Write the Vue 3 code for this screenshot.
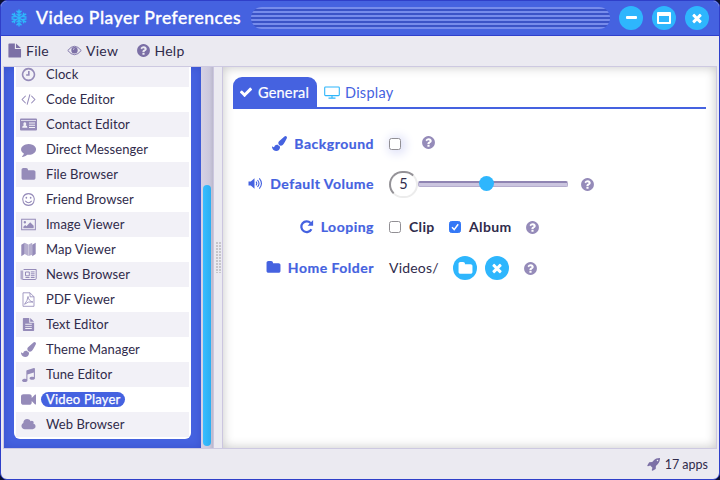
<script setup>
import { h } from 'vue'

const FA = '0 0 1792 1792'
const glyphs = {
  check: [FA, 'M1671 566q0 40-28 68l-724 724-136 136q-28 28-68 28t-68-28l-136-136-362-362q-28-28-28-68t28-68l136-136q28-28 68-28t68 28l294 295 656-657q28-28 68-28t68 28l136 136q28 28 28 68z'],
  times: [FA, 'M1490 1322q0 40-28 68l-136 136q-28 28-68 28t-68-28l-294-294-294 294q-28 28-68 28t-68-28l-136-136q-28-28-28-68t28-68l294-294-294-294q-28-28-28-68t28-68l136-136q28-28 68-28t68 28l294 294 294-294q28-28 68-28t68 28l136 136q28 28 28 68t-28 68l-294 294 294 294q28 28 28 68z'],
  folder: [FA, 'M1728 608v704q0 92-66 158t-158 66h-1216q-92 0-158-66t-66-158v-960q0-92 66-158t158-66h320q92 0 158 66t66 158v32h672q92 0 158 66t66 158z'],
  help: [FA, 'M1024 1376v-192q0-14-9-23t-23-9h-192q-14 0-23 9t-9 23v192q0 14 9 23t23 9h192q14 0 23-9t9-23zm256-672q0-88-55.5-163t-138.500-116-170-41q-243 0-371 213-15 24 8 42l132 100q7 6 19 6 16 0 25-12 53-68 86-92 34-24 86-24 48 0 85.500 26t37.500 59q0 38-20 61t-68 45q-63 28-115.500 86.500t-52.500 125.500v36q0 14 9 23t23 9h192q14 0 23-9t9-23q0-19 21.500-49.500t54.500-49.500q32-18 49-28.500t46-35 44.500-48 28-60.500 12.500-81zm384 192q0 209-103 385.500t-279.500 279.500-385.500 103-385.500-103-279.500-279.500-103-385.500 103-385.500 279.500-279.500 385.500-103 385.500 103 279.500 279.500 103 385.500z'],
  camera: [FA, 'M1792 352v1088q0 42-39 59-13 5-25 5-27 0-45-19l-403-403v166q0 119-84.500 203.500t-203.500 84.500h-704q-119 0-203.500-84.500t-84.500-203.500v-704q0-119 84.500-203.500t203.500-84.500h704q119 0 203.500 84.500t84.500 203.500v165l403-402q18-19 45-19 12 0 25 5 39 17 39 59z'],
  cloud: ['0 0 2048 1792', 'M1984 1152q0 159-112.500 271.500t-271.500 112.500h-1088q-185 0-316.500-131.500t-131.500-316.500q0-132 71-241.500t187-163.500q-2-28-2-43 0-212 150-362t362-150q158 0 286.500 88t187.500 230q70-62 166-62 106 0 181 75t75 181q0 75-41 138 129 30 213 134.500t84 239.500z'],
  comment: [FA, 'M1792 896q0 174-120 321.500t-326 233-450 85.500q-70 0-145-8-198 175-460 242-49 14-114 22-17 2-30.500-9t-17.500-29q-3-14 13-40l53-62q60-62 98-129t53-135q-157-89-247.500-220t-90.500-281q0-130 71-248.500t191-204.500 286-136.500 348-50.500q244 0 450 85.500t326 233 120 321.500z'],
  rocket: [FA, 'M1440 448q0-40-28-68t-68-28-68 28-28 68 28 68 68 28 68-28 28-68zm224-288q0 249-75.500 430.500t-253.500 360.500q-81 80-195 176l-20 379q-2 16-16 26l-384 224q-7 4-16 4-12 0-23-9l-64-64q-13-14-8-32l85-276-281-281-276 85q-3 1-9 1-14 0-23-9l-64-64q-17-19-5-39l224-384q10-14 26-16l379-20q96-114 176-195 188-187 358-258t431-71q14 0 24 9.500t10 22.500z'],
  brush: [FA, 'M1615 0q70 0 122.500 46.500t52.500 116.500q0 63-45 151-332 629-465 752-97 91-218 91-126 0-216.500-92.500t-90.500-219.500q0-128 92-212l638-579q59-54 130-54zm-909 1034q39 76 106.500 130t150.500 76l1 71q4 213-129.500 347t-348.500 134q-123 0-218-46.500t-152.500-127.500-86.500-183-29-220q7 5 41 30t62 44.500 59 36.500 46 17q41 0 55-37 25-66 57.500-112.500t69.500-76 88-47.500 103-25.500 125-10.500z'],
  music: [FA, 'M1664 224v1120q0 50-34 89t-86 60.500-103.500 32-96.500 10.500-96.500-10.500-103.500-32-86-60.500-34-89 34-89 86-60.500 103.500-32 96.500-10.500q105 0 192 39v-537l-768 237v709q0 50-34 89t-86 60.500-103.500 32-96.500 10.500-96.500-10.500-103.500-32-86-60.500-34-89 34-89 86-60.500 103.500-32 96.500-10.500q105 0 192 39v-967q0-31 19-56.500t49-35.500l832-256q12-4 28-4 40 0 68 28t28 68z'],
  file: ['0 0 16 16', 'M2.400.5h6v5.800H15v8.300q0 .9-.9.900H2.400q-.9 0-.9-.9V1.400Q1.500.5 2.400.5zM9.600.5l5.200 4.700H9.600z'],
  text: ['0 0 16 16', 'M2.800 1h6v5H14v8.200q0 .8-.8.8H2.800q-.8 0-.8-.8V1.800Q2 1 2.800 1zM9.800 1L14 5H9.800zM4.500 7.300v1h7v-1zm0 2.200v1h7v-1zm0 2.200v1h7v-1z'],
  contact: ['0 0 17 13', 'M1 .5h15q1 0 1 1v10q0 1-1 1H1q-1 0-1-1v-10q0-1 1-1zM1 2v.7h15V2zM4.800 4.200a1.500 1.700 0 0 0-.8 3.100Q2.200 7.600 2.200 9.800h5.200Q7.400 7.600 5.600 7.300a1.500 1.700 0 0 0-.8-3.100zM9 4.500v1h6v-1zm0 2.200v1h6v-1zm0 2.200v1h6v-1z'],
  map: ['0 0 15 14', 'M.3 2.200 3.700.3v11.300L.3 13.700zM11.200 2.200 14.700.3v11.300l-3.500 2.100z', null, 'M3.700.3 7.300 2v11.500l-3.600-1.900zM7.600 2 11.200.3v11.900L7.600 13.500z'],
  clock: ['0 0 14 14', null, 'M7 1.500a5.500 5.500 0 1 0 .01 0M7.300 3.800v3.700H4.800', null, 1.5],
  code: ['0 0 16 14', null, 'M5 3 1.200 7 5 11M11 3l3.800 4L11 11M9.500 1.500l-3 11', null, 1.1],
  smile: ['0 0 14 14', 'M4.200 5.300a.8.900 0 1 0 1.600 0 .8.900 0 1 0-1.600 0M8.200 5.300a.8.900 0 1 0 1.600 0 .8.900 0 1 0-1.600 0', 'M7 1.500a5.500 5.500 0 1 0 .01 0M4 8.300q3 3.600 6 0', null, 1],
  image: ['0 0 16 13', 'M2.500 10.500V9l2-2 1.300 1.300L9.800 4l3.700 3.800v2.700zM2.800 4.100a1.300 1.300 0 1 0 2.600 0 1.300 1.300 0 1 0-2.600 0', 'M.7.9h14.600v11.200H.7z', null, 1.1],
  news: ['0 0 17 12', null, 'M3.600 1h12.600v9q0 1-1 1H2.500M5.500 3.500h3.800v3.800H5.500zM5.500 9h4M10.800 3.400h3.800M10.800 5.300h3.800M10.800 7.200h3.800M10.800 9h3.800', 'M.5 2h2.700v9H1.500q-1 0-1-1z', 1],
  pdf: ['0 0 14 15', null, 'M1.500.8h7l4 4v9.500h-11zM8.500.8v4h4M3 12.300Q6.200 8.500 6.500 4.500Q7.300 9.300 11.500 10Q6.500 9 3 12.300', null, .85],
  eye: ['0 0 16 12', 'M4.600 5.700a3.400 3.400 0 1 0 6.800 0 3.400 3.400 0 1 0-6.800 0zM6.200 5a2 2 0 0 1 1.800-1.500v.8a1.200 1.200 0 0 0-1 .8z', 'M.8 6Q8-3 15.200 6 8 15 .8 6z', null, 1],
  monitor: ['0 0 16 13', null, 'M1.500 1h13q.8 0 .8.800v7q0 .8-.8.800h-13q-.8 0-.8-.8v-7Q.7 1 1.500 1zM8 9.600V12M4.500 12.100h7', null, 1.1],
  volume: ['0 0 15 13', 'M.5 4.500h2.300L6.500 1.300v10.400L2.800 8.500H.5z', 'M8 4.700q1.500 1.800 0 3.600M9.500 3q3 3.500 0 7M11.300 1.400q4.300 5.100 0 10.200', null, 1.1],
  loop: ['0 0 14 14', 'M13.200 1v5.300H8z', 'M10.800 3.700A5 5 0 1 0 11.600 9.500', null, 2.1],
  snow: ['0 0 18 18', null, 'M9 .6v16.800M1.800 4.800l14.400 8.400M1.800 13.200l14.400-8.400M6.500 1.800 9 4.200l2.500-2.400M6.500 16.200 9 13.800l2.500 2.400M1.500 8.300l3.600-.9-.9-3.600M16.500 9.700l-3.600.9.9 3.600M1.500 9.700l3.600.9-.9 3.600M16.500 8.300l-3.600-.9.9-3.600M6.500 4.700 9 6.700l2.500-2M6.500 13.300l2.500-2 2.500 2', null, 1.45]
}

const Icon = (props) => {
  const [viewBox, fill, stroke, soft, width] = glyphs[props.name]
  return h('svg', { viewBox }, [
    fill && h('path', { d: fill, fill: 'currentColor', 'fill-rule': 'evenodd' }),
    soft && h('path', { d: soft, fill: 'currentColor', opacity: 0.7 }),
    stroke && h('path', { d: stroke, fill: 'none', stroke: 'currentColor', 'stroke-width': width })
  ])
}
Icon.props = ['name']

const apps = [
  ['Clock', 'clock'], ['Code Editor', 'code'], ['Contact Editor', 'contact', 'wide'],
  ['Direct Messenger', 'comment'], ['File Browser', 'folder'], ['Friend Browser', 'smile'],
  ['Image Viewer', 'image'], ['Map Viewer', 'map'], ['News Browser', 'news', 'wide'],
  ['PDF Viewer', 'pdf'], ['Text Editor', 'text'], ['Theme Manager', 'brush'],
  ['Tune Editor', 'music'], ['Video Player', 'camera'], ['Web Browser', 'cloud']
]
</script>

<template>
  <div class="desktop">
    <div class="window">
      <header class="titlebar">
        <Icon name="snow" class="snow" />
        <h1>Video Player Preferences</h1>
        <div class="grip"></div>
        <div class="buttons">
          <button class="round"><i class="min"></i></button>
          <button class="round"><i class="max"></i></button>
          <button class="round"><Icon name="times" class="x" /></button>
        </div>
      </header>
      <nav class="menubar">
        <span class="m-file"><Icon name="file" />File</span>
        <span class="m-view"><Icon name="eye" />View</span>
        <span class="m-help"><Icon name="help" />Help</span>
      </nav>
      <main class="body">
        <aside class="sidebar">
          <ul>
            <li v-for="[name, icon, size] in apps" :key="name" :class="{ active: name === 'Video Player' }">
              <Icon :name="icon" :class="size" /><span>{{ name }}</span>
            </li>
          </ul>
        </aside>
        <div class="scroll"><div class="thumb"></div></div>
        <div class="splitter"><div class="dots"></div></div>
        <section class="pane">
          <div class="tabs">
            <div class="tab on"><Icon name="check" />General</div>
            <div class="tab off"><Icon name="monitor" />Display</div>
          </div>
          <div class="form">
            <div class="row">
              <label class="key"><Icon name="brush" />Background</label>
              <i class="box glow"></i>
              <Icon name="help" class="help h1" />
            </div>
            <div class="row">
              <label class="key"><Icon name="volume" />Default Volume</label>
              <span class="num">5</span>
              <div class="slider"><div class="knob"></div></div>
              <Icon name="help" class="help h2" />
            </div>
            <div class="row tall">
              <label class="key"><Icon name="loop" />Looping</label>
              <i class="box"></i><b class="clip">Clip</b>
              <i class="box checked"><svg viewBox="0 0 12 12"><path d="M3 6.300 5.200 8.600 9.200 3.200" /></svg></i><b class="album">Album</b>
              <Icon name="help" class="help h3" />
            </div>
            <div class="row last">
              <label class="key"><Icon name="folder" />Home Folder</label>
              <span class="path">Videos/</span>
              <button class="round"><Icon name="folder" class="fold" /></button>
              <button class="round second"><Icon name="times" class="x" /></button>
              <Icon name="help" class="help h4" />
            </div>
          </div>
        </section>
      </main>
      <footer><Icon name="rocket" />17 apps</footer>
    </div>
  </div>
</template>

<style>
body { margin: 0; overflow: hidden; }
</style>

<style scoped>
* { box-sizing: border-box; }
svg { display: block; flex: none; }
.desktop { width: 720px; height: 480px; background: #0b1030; font-family: Lato, "Liberation Sans", sans-serif; color: #302b4b; overflow: hidden; }
.window { height: 480px; border: 1px solid #2f3fc9; border-radius: 7px; background: #ebeaf1; overflow: hidden; display: flex; flex-direction: column; }
.titlebar { flex: none; height: 35px; background: #4562e0; border-bottom: 1px solid #2f40cc; display: flex; align-items: center; padding-left: 9px; }
.snow { width: 18px; height: 18px; color: #2eb6fb; }
h1 { margin: 0 0 0 8px; width: 215px; font-size: 17.5px; line-height: 34px; font-weight: 500; letter-spacing: .53px; color: #fff; white-space: nowrap; -webkit-text-stroke: .35px #fff; }
.grip { width: 359px; height: 22px; border-radius: 11px; background: repeating-linear-gradient(#778ceb 0 2px, #3b53c7 2px 4px); }
.buttons { display: flex; gap: 9px; margin-left: 9px; }
.round { flex: none; width: 24px; height: 24px; border: 0; padding: 0; border-radius: 50%; background: #2eb6fd; color: #fff; display: flex; align-items: center; justify-content: center; }
.min { width: 11px; height: 3px; background: #fff; border-radius: 1px; margin-top: -1px; }
.max { width: 14px; height: 12px; border: 2px solid #fff; border-top-width: 4px; border-radius: 1px; }
.x { width: 14px; height: 14px; }
.menubar { flex: none; height: 30px; display: flex; align-items: center; font-size: 14px; padding: 0 0 2px 6px; }
.menubar span { display: flex; align-items: center; letter-spacing: .25px; }
.menubar svg { color: #7c70a6; width: 15px; height: 15px; margin-right: 4px; }
.m-file { width: 60px; }
.m-view { width: 68.5px; }
.body { height: 383px; flex: none; margin: 0 2px; border: 1px solid #cdc9e1; display: flex; overflow: hidden; }
.sidebar { flex: none; width: 197px; padding: 0 10px 9px; background: #4562e0; display: flex; align-items: flex-end; box-shadow: inset 0 0 8px #3a52cb; }
ul { list-style: none; margin: 0; padding: 2px; width: 177px; background: #fff; border-radius: 6px; }
li { height: 25px; display: flex; align-items: center; font-size: 13px; letter-spacing: .08px; padding-left: 5px; }
li:nth-child(odd) { background: #f2f1f7; }
li svg { width: 15px; height: 15px; color: #958bb9; }
li svg.wide { width: 17px; margin-left: -1px; margin-right: -1px; }
li span { margin-left: 5px; padding: 0 5px; height: 15px; line-height: 15px; border-radius: 7.5px; white-space: nowrap; }
.active span { background: #4562e0; color: #fff; letter-spacing: .2px; -webkit-text-stroke: .25px #fff; }
.scroll { flex: none; width: 12px; padding: 118px 2px 2px; background: linear-gradient(90deg, #d6d2e4, #cbc8dd 70%, #bbb8cd); }
.thumb { height: 261px; border-radius: 4px; background: linear-gradient(90deg, #36bdff, #2aaef2); }
.splitter { flex: none; width: 10px; border: solid #cbc6df; border-width: 0 1px; display: flex; align-items: center; justify-content: center; }
.dots { width: 5px; height: 31px; background: repeating-linear-gradient(transparent 0 2px, #ebeaf1 2px 3px), repeating-linear-gradient(90deg, #c7c6cb 0 2px, #ebeaf1 2px 3px); }
.pane { flex: 1; background: #fff; box-shadow: inset 0 0 11px #c6c6c6; padding: 10px 10px 0; }
.tabs { height: 32px; border-bottom: 2px solid #4562e0; display: flex; align-items: stretch; font-size: 14.5px; }
.tab { display: flex; align-items: center; }
.on { width: 84px; background: #4562e0; color: #fff; border-radius: 9px 9px 0 0; padding-left: 7px; letter-spacing: .2px; -webkit-text-stroke: .2px #fff; }
.on svg { width: 14px; height: 14px; margin: 0 5px 0 -1px; }
.off { padding-left: 7px; color: #4562e0; letter-spacing: .25px; }
.off svg { width: 16px; height: 13px; color: #2eb6fb; margin-right: 5px; }
.form { padding-top: 15px; }
.row { height: 40px; display: flex; align-items: center; font-size: 14px; }
.row.tall { height: 46px; }
.row.last { height: 36px; }
.key { width: 141px; margin-right: 15px; padding-bottom: 2px; display: flex; justify-content: flex-end; align-items: center; font-weight: 700; color: #4562e0; white-space: nowrap; letter-spacing: .5px; -webkit-text-stroke: .2px #4562e0; }
.key svg { width: 15px; height: 15px; margin-right: 7px; }
.box { flex: none; width: 12px; height: 12px; border: 1px solid #918f94; border-radius: 2.5px; background: #fff; }
.glow { box-shadow: 2px 1px 10px 3px #e2e4f9; }
.checked { border-color: #3478f6; background: #3478f6; margin-left: 14px; }
.checked svg { width: 12px; height: 12px; margin: -1px; fill: none; stroke: #fff; stroke-width: 1.5; }
.help { width: 15px; height: 15px; color: #958bb9; }
.h1 { margin: -4px 0 0 20px; }
.h2 { margin-left: 12px; }
.h3 { margin-left: 12px; }
.h4 { margin-left: 14px; }
.num { width: 29px; height: 27px; border: 2px solid; border-color: #949297 #ececec #ececec #949297; border-radius: 14px; display: flex; align-items: center; justify-content: center; font-size: 14.5px; padding-bottom: 1px; }
.slider { width: 150px; height: 6px; border-radius: 2px; background: #cbc5df; border: 1px solid #b5adce; border-top: 2px solid #8f84b2; display: flex; align-items: center; padding-left: 60px; margin-top: -1px; }
.knob { flex: none; width: 15px; height: 15px; border-radius: 50%; background: #2eb6fd; margin-top: -1px; }
.clip, .album { margin-left: 8px; padding-bottom: 2px; letter-spacing: .35px; white-space: nowrap; }
.clip { width: 26px; }
.album { width: 44px; }
.path { width: 64px; padding-bottom: 2px; letter-spacing: .2px; }
.second { margin-left: 8px; }
.fold { width: 15px; height: 15px; }
footer { flex: 1; display: flex; align-items: center; justify-content: flex-end; padding-right: 11px; font-size: 12.500px; }
footer svg { width: 14px; height: 14px; color: #7c70a6; margin-right: 4px; }
</style>
